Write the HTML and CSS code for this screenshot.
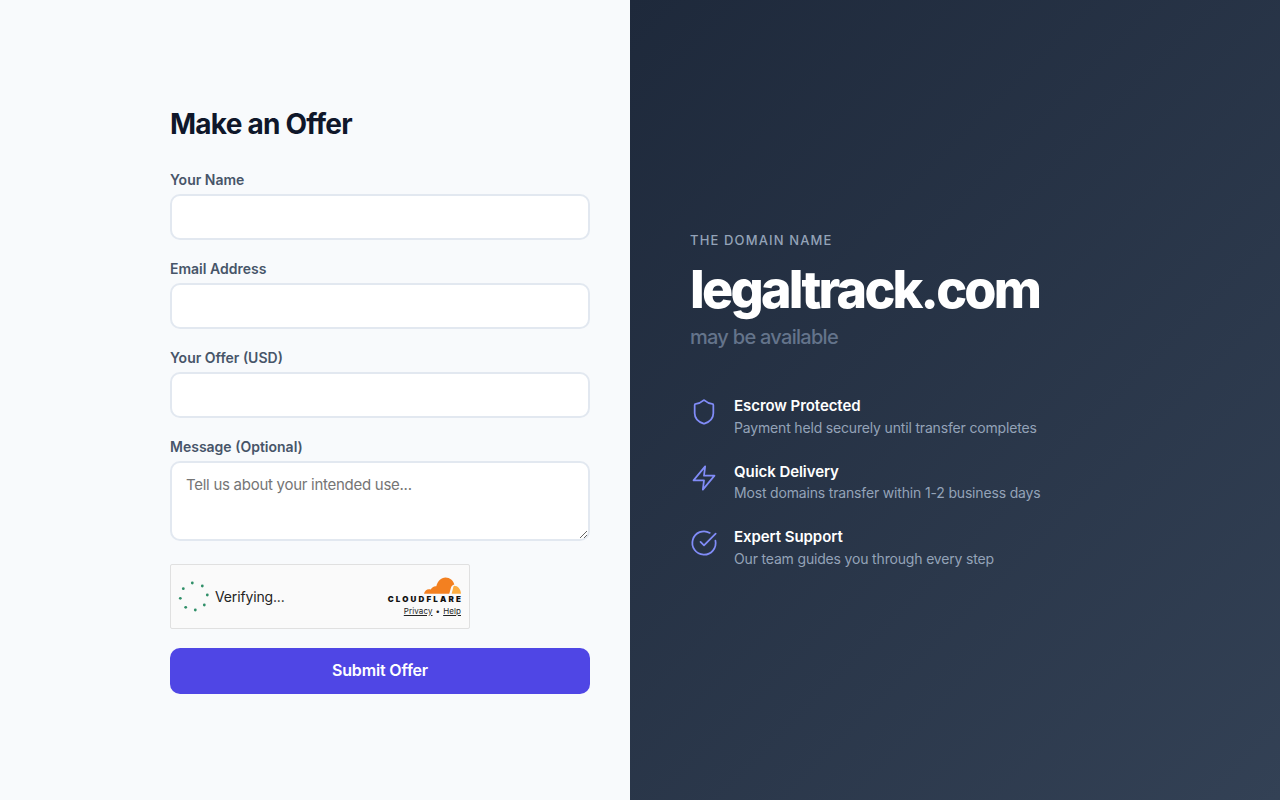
FILE: index.html
```html
<!DOCTYPE html>
<html lang="en">

<head>
    <meta charset="UTF-8">
    <meta name="viewport" content="width=device-width, initial-scale=1.0">
    <title>legaltrack.com may be available</title>
    <link rel="stylesheet" href="styles.css">
</head>

<body>
    <div class="split">
        <section class="form-side">
            <form class="offer-form">
                <h2>Make an Offer</h2>
                <div class="field">
                    <label for="name">Your Name</label>
                    <input type="text" id="name">
                </div>
                <div class="field">
                    <label for="email">Email Address</label>
                    <input type="email" id="email">
                </div>
                <div class="field">
                    <label for="offer">Your Offer (USD)</label>
                    <input type="text" id="offer">
                </div>
                <div class="field">
                    <label for="message">Message (Optional)</label>
                    <textarea id="message" placeholder="Tell us about your intended use..."></textarea>
                </div>

                <!-- Turnstile widget -->
                <div class="turnstile">
                    <svg class="spinner" width="34" height="34" viewBox="0 0 34 34" fill="#2f8f68">
                        <circle cx="15.3" cy="3" r="1.4"/>
                        <circle cx="25.3" cy="6" r="1.4"/>
                        <circle cx="30.3" cy="15" r="1.4"/>
                        <circle cx="27.3" cy="25" r="1.4"/>
                        <circle cx="18.3" cy="30" r="1.4"/>
                        <circle cx="8.7" cy="27.3" r="1.4"/>
                        <circle cx="3.3" cy="18.3" r="1.4"/>
                        <circle cx="6.3" cy="8.7" r="1.4"/>
                    </svg>
                    <span class="verifying">Verifying...</span>
                    <div class="cf-brand">
                        <svg class="cf-cloud" width="37" height="17" viewBox="0 0 37 17">
                            <path fill="#f38020" d="M0 16.800C.4 14 2.600 12.200 5 12.200c.6 0 1.200.1 1.700.3C7.800 10.300 10 9 12.300 9.300 13.600 4.300 17 .6 21.500.6c4.400 0 7.900 2.900 8.800 7-1.700.4-3 1.800-3.500 3.600l-1.500 5.600z"/>
                            <path fill="#fbad41" d="M30 8.800c3.900 0 6.800 3.500 7 8H27.600l1-3.800c.4-1.400.4-2.900 1.400-4.200z"/>
                        </svg>
                        <div class="cf-word">CLOUDFLARE</div>
                        <div class="cf-links"><a href="#">Privacy</a><span>•</span><a href="#">Help</a></div>
                    </div>
                </div>

                <button type="submit" class="submit-btn">Submit Offer</button>
            </form>
        </section>

        <section class="info-side">
            <div class="eyebrow">THE DOMAIN NAME</div>
            <h1 class="domain">legaltrack.com</h1>
            <div class="available">may be available</div>

            <ul class="features">
                <li>
                    <svg class="feature-icon" viewBox="0 0 24 24">
                        <path d="M20 13c0 5-3.500 7.500-7.660 8.950a1 1 0 0 1-.67-.01C7.500 20.500 4 18 4 13V6a1 1 0 0 1 1-1c2 0 4.500-1.200 6.240-2.720a1.170 1.170 0 0 1 1.520 0C14.510 3.810 17 5 19 5a1 1 0 0 1 1 1z"/>
                    </svg>
                    <div>
                        <h3>Escrow Protected</h3>
                        <p>Payment held securely until transfer completes</p>
                    </div>
                </li>
                <li>
                    <svg class="feature-icon" viewBox="0 0 24 24">
                        <polygon points="13 2 3 14 12 14 11 22 21 10 12 10 13 2"/>
                    </svg>
                    <div>
                        <h3>Quick Delivery</h3>
                        <p>Most domains transfer within 1-2 business days</p>
                    </div>
                </li>
                <li>
                    <svg class="feature-icon" viewBox="0 0 24 24">
                        <path d="M21.800 10A10 10 0 1 1 17 3.340"/>
                        <path d="m9 11 3 3L22 4"/>
                    </svg>
                    <div>
                        <h3>Expert Support</h3>
                        <p>Our team guides you through every step</p>
                    </div>
                </li>
            </ul>
        </section>
    </div>
</body>

</html>
```

FILE: styles.css
```css
* {
    box-sizing: border-box;
}

body {
    font-family: Inter, "Liberation Sans", sans-serif;
    margin: 0;
    padding: 0;
    line-height: 1.5;
    color: #0f172a;
    background-color: #f8fafc;
}

.split {
    display: flex;
    height: 800px;
    overflow: hidden;
}

/* Form side */
.form-side {
    width: 630px;
    padding: 0 40px;
    display: flex;
    align-items: center;
    justify-content: flex-end;
    background-color: #f8fafc;
}

.offer-form {
    width: 420px;
}

.offer-form h2 {
    margin: 0 0 28px;
    font-size: 28px;
    font-weight: 700;
    line-height: 36px;
    letter-spacing: -0.76px;
    color: #0f172a;
}

.field {
    margin-bottom: 19px;
}

.field label {
    display: block;
    margin-bottom: 5px;
    font-size: 14px;
    font-weight: 600;
    line-height: 19px;
    color: #475569;
}

.field input,
.field textarea {
    display: block;
    width: 100%;
    padding: 12px 14px;
    font-family: inherit;
    font-size: 15px;
    line-height: 18px;
    background-color: #fff;
    border: 2px solid #e2e8f0;
    border-radius: 10px;
    outline: none;
}

.field input {
    height: 46px;
}

.field textarea {
    height: 80px;
    padding-top: 13px;
    resize: vertical;
}

.field textarea::placeholder {
    letter-spacing: -0.27px;
}

/* Turnstile widget */
.turnstile {
    display: flex;
    align-items: center;
    width: 300px;
    height: 65px;
    margin-top: 23px;
    margin-bottom: 19px;
    padding: 0 8px 0 6px;
    background-color: #fafafa;
    border: 1px solid #e0e0e0;
    border-radius: 2px;
}

.spinner {
    flex-shrink: 0;
}

.verifying {
    margin-left: 4px;
    font-size: 14px;
    letter-spacing: -0.15px;
    color: #232323;
}

.cf-brand {
    margin-left: auto;
    display: flex;
    flex-direction: column;
    align-items: flex-end;
}

.cf-cloud {
    display: block;
}

.cf-word {
    font-size: 8px;
    font-weight: 900;
    line-height: 9px;
    letter-spacing: 2.15px;
    margin-right: -2px;
    margin-top: 1px;
    color: #111;
}

.cf-links {
    display: flex;
    gap: 3px;
    margin-top: 2px;
    font-size: 8px;
    line-height: 10px;
    letter-spacing: 0.1px;
    color: #232323;
}

.cf-links a {
    color: #232323;
}

.submit-btn {
    display: block;
    width: 100%;
    height: 46px;
    padding: 0 0 2px;
    font-family: inherit;
    font-size: 16px;
    font-weight: 600;
    letter-spacing: -0.15px;
    color: #fff;
    background-color: #4f46e5;
    border: none;
    border-radius: 10px;
    cursor: pointer;
}

/* Info side */
.info-side {
    flex: 1;
    padding: 0 60px 1px;
    display: flex;
    flex-direction: column;
    justify-content: center;
    background: linear-gradient(135deg, #1e293b 0%, #334155 100%);
}

.eyebrow {
    font-size: 13px;
    font-weight: 500;
    line-height: 20px;
    letter-spacing: 1.14px;
    color: #94a3b8;
}

.domain {
    margin: 11px 0 0;
    font-size: 52px;
    font-weight: 800;
    line-height: 58px;
    letter-spacing: -2.77px;
    color: #fff;
}

.available {
    margin-top: 3px;
    font-size: 20px;
    font-weight: 500;
    line-height: 30px;
    letter-spacing: -0.72px;
    color: #64748b;
}

.features {
    list-style: none;
    margin: 43px 0 0;
    padding: 0;
    display: flex;
    flex-direction: column;
    gap: 23px;
}

.features li {
    display: flex;
    gap: 16px;
}

.feature-icon {
    flex-shrink: 0;
    width: 28px;
    height: 28px;
    margin-top: 3px;
    fill: none;
    stroke: #818cf8;
    stroke-width: 1.5;
    stroke-linecap: round;
    stroke-linejoin: round;
}

.features h3 {
    margin: 0;
    font-size: 15px;
    font-weight: 600;
    line-height: 21.5px;
    letter-spacing: -0.06px;
    color: #fff;
}

.features p {
    margin: 0;
    font-size: 14px;
    line-height: 21px;
    letter-spacing: -0.17px;
    color: #94a3b8;
}
```
